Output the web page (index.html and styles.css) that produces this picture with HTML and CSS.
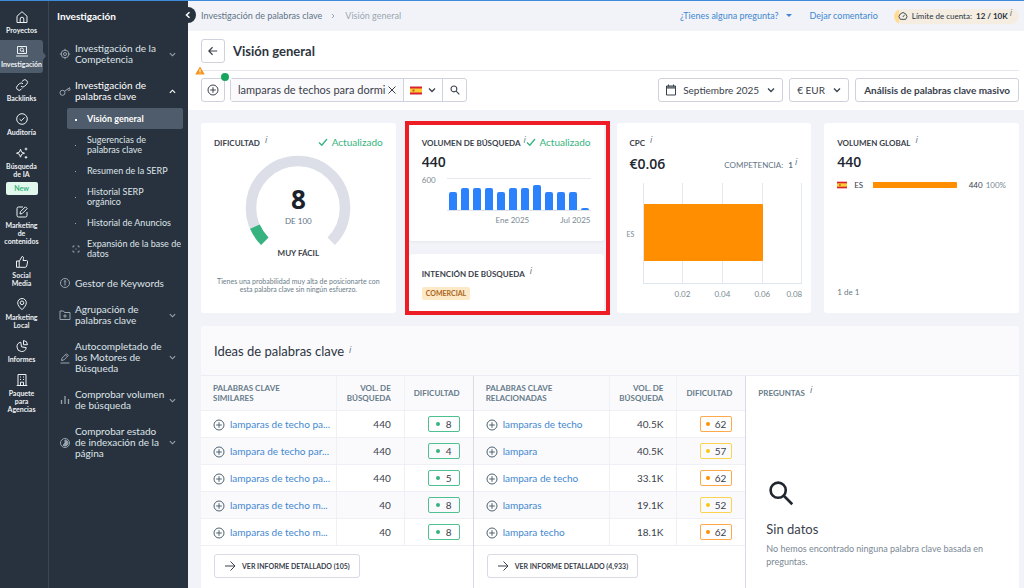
FILE: index.html
```html
<!DOCTYPE html>
<html lang="es">
<head>
<meta charset="utf-8">
<meta name="viewport" content="width=device-width, initial-scale=1">
<title>Visión general</title>
<link rel="stylesheet" href="styles.css">
</head>
<body>
<svg class="defs" aria-hidden="true">
  <symbol id="plus" viewBox="0 0 12 12"><circle cx="6" cy="6" r="5"/><path d="M6 3.2v5.6M3.2 6h5.6"/></symbol>
  <symbol id="down" viewBox="0 0 8 8"><path d="M1 2.5 4 5.5 7 2.5"/></symbol>
  <symbol id="check" viewBox="0 0 10 10"><path d="M1 5.5 3.8 8.2 9 2"/></symbol>
  <symbol id="arrow" viewBox="0 0 12 12"><path d="M1 6h10M6.5 1.5 11 6l-4.500 4.500"/></symbol>
  <symbol id="flag" viewBox="0 0 12 8"><path fill="#d8232f" stroke="none" d="M0 0h12v8H0z"/><path fill="#fc3" stroke="none" d="M0 2h12v4H0z"/><path fill="#b5652a" stroke="none" d="M2.500 3h2v2h-2z"/></symbol>
  <symbol id="search" viewBox="0 0 12 12"><circle cx="4.700" cy="4.700" r="3.500"/><path d="m7.400 7.400 3.800 3.800"/></symbol>
</svg>
<div class="app">
  <nav class="rail" aria-label="Principal">
    <a href="#"><svg viewBox="0 0 14 14"><path d="M2 6.200 7 1.700l5 4.500V12.500H2zM5.200 12.300V9a1.800 1.800 0 0 1 3.600 0v3.300"/></svg>Proyectos</a>
    <a href="#" class="active"><svg viewBox="0 0 14 14"><path d="M2.500 2.500h9v7h-9zM1 12h12"/><circle cx="6.800" cy="5.700" r="1.700"/><path d="m8 7 1.300 1.200"/></svg>Investigación</a>
    <a href="#"><svg viewBox="0 0 14 14"><path d="M6 8.200a2.600 2.600 0 0 0 3.700 0l2-2a2.600 2.600 0 0 0-3.700-3.700L6.900 3.600M8 5.800a2.600 2.600 0 0 0-3.700 0l-2 2A2.600 2.600 0 0 0 6 11.500l1.100-1.100"/></svg>Backlinks</a>
    <a href="#"><svg viewBox="0 0 14 14"><circle cx="7" cy="7" r="5.300"/><path d="m4.600 7.200 1.700 1.600 3.200-3.300"/></svg>Auditoría</a>
    <a href="#"><svg viewBox="0 0 14 14"><path d="m5.500 3.200 1.100 2.900 2.900 1.100-2.900 1.100-1.100 2.900-1.100-2.900-2.900-1.100 2.900-1.100z"/><path d="M11 1.700v2.600M9.700 3h2.600M11 10v2.600M9.700 11.300h2.600"/></svg>Búsqueda<br>de IA<span class="new">New</span></a>
    <a href="#"><svg viewBox="0 0 14 14"><path d="M8 2H3.500Q2 2 2 3.500v7Q2 12 3.500 12h7q1.500 0 1.500-1.500V7M5 9l.4-2.200 5-5 1.800 1.800-5 5z"/></svg>Marketing<br>de<br>contenidos</a>
    <a href="#"><svg viewBox="0 0 14 14"><path d="M1.500 6h2.700v6.300H1.500zM4.200 6.500 7 1.500c1.200 0 1.800.8 1.500 2L8 5.500h3.600q1.200.2 1 1.400l-.9 4.200q-.3 1.200-1.500 1.200h-6"/></svg>Social<br>Media</a>
    <a href="#"><svg viewBox="0 0 14 14"><path d="M7 12.700C4.500 10.300 2.700 8 2.700 5.800a4.300 4.300 0 0 1 8.600 0C11.300 8 9.500 10.300 7 12.700z"/><circle cx="7" cy="5.800" r="1.800"/></svg>Marketing<br>Local</a>
    <a href="#"><svg viewBox="0 0 14 14"><path d="M5.800 3.200a4.700 4.700 0 1 0 5.500 5.500L6.500 7.800zM8.500 1.500a4.300 4.300 0 0 1 4 4.200H8.500z"/></svg>Informes</a>
    <a href="#"><svg viewBox="0 0 14 14"><path d="M3 12.500v-11h8v11M1.700 12.500h10.600M5 4h1M8 4h1M5 6.500h1M8 6.500h1M5.500 12.500V9.200h3v3.300"/></svg>Paquete<br>para<br>Agencias</a>
  </nav>
  <nav class="side" aria-label="Investigación">
    <h2>Investigación</h2>
    <button class="collapse" aria-label="Contraer menú"><svg viewBox="0 0 8 8"><path d="M5.500 1.200 2.500 4l3 2.800"/></svg></button>
    <a class="group" href="#"><svg class="gi" viewBox="0 0 12 12"><circle cx="6" cy="6" r="3.800"/><circle cx="6" cy="6" r="1.500"/><path d="M6 .8v2M6 9.200v2M.8 6h2M9.200 6h2"/></svg><span>Investigación de la<br>Competencia</span><svg class="chev"><use href="#down"/></svg></a>
    <a class="group open" href="#"><svg class="gi" viewBox="0 0 12 12"><circle cx="3.500" cy="7.800" r="2.500"/><path d="M5.500 6.200 11 2.500M8.500 4.200l1 1.600 1.700-1-.8-1.800"/></svg><span>Investigación de<br>palabras clave</span><svg class="chev up"><use href="#down"/></svg></a>
    <ul class="sub">
      <li class="current"><a href="#">Visión general</a></li>
      <li><a href="#">Sugerencias de<br>palabras clave</a></li>
      <li><a href="#">Resumen de la SERP</a></li>
      <li><a href="#">Historial SERP<br>orgánico</a></li>
      <li><a href="#">Historial de Anuncios</a></li>
      <li class="expand"><svg viewBox="0 0 8 8"><path d="M1 2.500V1h1.500M5.500 1H7v1.500M7 5.500V7H5.500M2.500 7H1V5.500M3.500 4h1"/></svg><a href="#">Expansión de la base de<br>datos</a></li>
    </ul>
    <a class="group" href="#"><svg class="gi" viewBox="0 0 12 12"><circle cx="6" cy="6" r="4.500"/><path d="M6 8.600V3.700M4.800 4.700 6 3.600l1.200 1.100"/></svg><span>Gestor de Keywords</span></a>
    <a class="group" href="#"><svg class="gi" viewBox="0 0 12 12"><path d="M1 2h3.500l1 1.500H11V10.500H1zM6 5.200v3.600M4.200 7h3.600"/></svg><span>Agrupación de<br>palabras clave</span><svg class="chev"><use href="#down"/></svg></a>
    <a class="group" href="#"><svg class="gi" viewBox="0 0 12 12"><path d="m2.500 8.500.5-2.300 4.500-4.500 1.800 1.800-4.500 4.500zM6.500 2.700l1.800 1.800M1.500 11h9"/></svg><span>Autocompletado de<br>los Motores de<br>Búsqueda</span><svg class="chev"><use href="#down"/></svg></a>
    <a class="group" href="#"><svg class="gi" viewBox="0 0 12 12"><path d="M2.500 10V6M6 10V2M9.500 10V5" stroke-width="1.300"/></svg><span>Comprobar volumen<br>de búsqueda</span><svg class="chev"><use href="#down"/></svg></a>
    <a class="group" href="#"><svg class="gi" viewBox="0 0 12 12"><circle cx="6" cy="6" r="4.500"/><path d="M6 3a3 3 0 1 1-2 5.200L6 6z" fill="#97a3ad"/></svg><span>Comprobar estado<br>de indexación de la<br>página</span><svg class="chev"><use href="#down"/></svg></a>
  </nav>
  <main>
    <div class="topbar">
      <div class="crumbs"><a href="#">Investigación de palabras clave</a><svg viewBox="0 0 6 8"><path d="m2 2 2 2-2 2"/></svg><span>Visión general</span></div>
      <div class="toplinks"><a href="#">¿Tienes alguna pregunta?<i class="tri"></i></a><a href="#">Dejar comentario</a>
        <span class="limit"><svg viewBox="0 0 12 12"><path d="M2.800 10a4.600 4.600 0 1 1 6.400 0zM5.700 7.300 8 4.500"/></svg>Límite de cuenta:  <b>12 / 10K</b><sup>i</sup></span></div>
    </div>
    <header class="head">
      <div class="titlebar"><button class="box" aria-label="Volver"><svg class="back"><use href="#arrow"/></svg></button><h1>Visión general</h1></div>
      <svg class="warn" viewBox="0 0 10 9"><path d="M5 .5 9.800 8.500H.2z" fill="#f7941e"/><path d="M5 3.200v2.700M5 6.700v.9" stroke="#fff"/></svg>
      <div class="tools">
        <button class="box add" aria-label="Añadir"><svg><use href="#plus"/></svg></button>
        <form class="search">
          <div class="field"><input type="text" aria-label="Palabra clave" value="lamparas de techos para dormi"><button type="button" aria-label="Borrar"><svg viewBox="0 0 10 10"><path d="m1.500 1.500 7 7M8.500 1.500l-7 7"/></svg></button></div>
          <button type="button" class="country" aria-label="España"><svg class="flag"><use href="#flag"/></svg><svg class="dn"><use href="#down"/></svg></button>
          <button type="button" class="go" aria-label="Buscar"><svg><use href="#search"/></svg></button>
        </form>
        <div class="right">
          <button class="box wide"><svg class="cal" viewBox="0 0 12 12"><path d="M1.500 2h9v9h-9zM1.500 4h9M3.500.5v2M8.500.5v2M1.500 3h9"/></svg>Septiembre 2025<svg class="dn"><use href="#down"/></svg></button>
          <label class="currency"><select aria-label="Moneda"><option>€ EUR</option></select><svg class="dn"><use href="#down"/></svg></label>
          <button class="box wide bulk">Análisis de palabras clave masivo</button>
        </div>
      </div>
    </header>
    <div class="content">
      <section class="cards">
        <article class="card difficulty">
          <div class="cap"><h3>Dificultad<sup>i</sup></h3><span class="ok"><svg><use href="#check"/></svg>Actualizado</span></div>
          <div class="gauge">
            <svg viewBox="0 0 106 92" fill="none" stroke-width="10.500"><path stroke="#dcdfe8" d="M19.800 86.200A47 47 0 1 1 86.200 86.200"/><path stroke="#36b37e" d="M19.800 86.200A47 47 0 0 1 9.900 71.700"/></svg>
            <div class="score"><strong>8</strong><span>DE 100</span></div>
          </div>
          <b class="verdict">MUY FÁCIL</b>
          <p>Tienes una probabilidad muy alta de posicionarte con esta palabra clave sin ningún esfuerzo.</p>
        </article>
        <div class="marked">
          <article class="card volume">
            <div class="cap"><h3>Volumen de búsqueda<sup>i</sup></h3><span class="ok"><svg><use href="#check"/></svg>Actualizado</span></div>
            <div class="num">440</div>
            <div class="trend"><span class="max">600</span><div class="bars"><i style="height:57%"></i><i style="height:70%"></i><i style="height:70%"></i><i style="height:70%"></i><i style="height:57%"></i><i style="height:70%"></i><i style="height:70%"></i><i style="height:80%"></i><i style="height:57%"></i><i style="height:57%"></i><i style="height:57%"></i><i style="height:5%"></i></div>
            <div class="months"><span>Ene 2025</span><span>Jul 2025</span></div></div>
          </article>
          <article class="card intent">
            <div class="cap"><h3>Intención de búsqueda<sup>i</sup></h3></div>
            <span class="tag">COMERCIAL</span>
          </article>
        </div>
        <article class="card cpc">
          <div class="cap"><h3>CPC<sup>i</sup></h3></div>
          <div class="pair"><div class="num">€0.06</div><span class="comp">COMPETENCIA: <b>1</b><sup>i</sup></span></div>
          <div class="plot"><span class="cat">ES</span><div class="area"><i></i><i></i><i></i><i></i><div class="bar"></div></div>
            <div class="ticks"><span>0.02</span><span>0.04</span><span>0.06</span><span>0.08</span></div></div>
        </article>
        <article class="card global">
          <div class="cap"><h3>Volumen global<sup>i</sup></h3></div>
          <div class="num">440</div>
          <div class="row"><svg><use href="#flag"/></svg><span>ES</span><i></i><span class="amt">440 <em>100%</em></span></div>
          <div class="pages">1 de 1</div>
        </article>
      </section>
      <section class="ideas">
        <h2>Ideas de palabras clave<sup>i</sup></h2>
        <div class="panels">
          <div class="panel">
            <table>
              <thead><tr><th>Palabras clave<br>similares</th><th>Vol. de<br>búsqueda</th><th>Dificultad</th></tr></thead>
              <tbody>
                <tr><td><svg><use href="#plus"/></svg><a href="#">lamparas de techo pa...</a></td><td>440</td><td><span class="kd">8</span></td></tr>
                <tr><td><svg><use href="#plus"/></svg><a href="#">lampara de techo par...</a></td><td>440</td><td><span class="kd">4</span></td></tr>
                <tr><td><svg><use href="#plus"/></svg><a href="#">lamparas de techo pa...</a></td><td>440</td><td><span class="kd">5</span></td></tr>
                <tr><td><svg><use href="#plus"/></svg><a href="#">lamparas de techo m...</a></td><td>40</td><td><span class="kd">8</span></td></tr>
                <tr><td><svg><use href="#plus"/></svg><a href="#">lamparas de techo m...</a></td><td>40</td><td><span class="kd">8</span></td></tr>
              </tbody>
            </table>
            <button class="report"><svg><use href="#arrow"/></svg>VER INFORME DETALLADO (105)</button>
          </div>
          <div class="panel">
            <table>
              <thead><tr><th>Palabras clave<br>relacionadas</th><th>Vol. de<br>búsqueda</th><th>Dificultad</th></tr></thead>
              <tbody>
                <tr><td><svg><use href="#plus"/></svg><a href="#">lamparas de techo</a></td><td>40.5K</td><td><span class="kd high">62</span></td></tr>
                <tr><td><svg><use href="#plus"/></svg><a href="#">lampara</a></td><td>40.5K</td><td><span class="kd mid">57</span></td></tr>
                <tr><td><svg><use href="#plus"/></svg><a href="#">lampara de techo</a></td><td>33.1K</td><td><span class="kd high">62</span></td></tr>
                <tr><td><svg><use href="#plus"/></svg><a href="#">lamparas</a></td><td>19.1K</td><td><span class="kd mid">52</span></td></tr>
                <tr><td><svg><use href="#plus"/></svg><a href="#">lampara techo</a></td><td>18.1K</td><td><span class="kd high">62</span></td></tr>
              </tbody>
            </table>
            <button class="report"><svg><use href="#arrow"/></svg>VER INFORME DETALLADO (4,933)</button>
          </div>
          <div class="panel questions">
            <h3>Preguntas<sup>i</sup></h3>
            <div class="empty"><svg><use href="#search"/></svg><h4>Sin datos</h4><p>No hemos encontrado ninguna palabra clave basada en preguntas.</p></div>
          </div>
        </div>
      </section>
    </div>
  </main>
</div>
</body>
</html>
```

FILE: styles.css
```css
* { box-sizing: border-box; margin: 0; padding: 0; }
body { font: 10px/12px Lato, "Noto Sans", sans-serif; color: #3a414b; background: #f2f3f8; }
button, input, select { font: inherit; color: inherit; background: none; border: 0; }
a { color: #3f87d0; text-decoration: none; }
svg { fill: none; stroke: currentColor; flex: none; }
sup { font: italic 9px/8px "Open Sans", sans-serif; color: #5b7080; margin-left: 5px; vertical-align: 3px; text-transform: none; }
.defs { position: absolute; width: 0; height: 0; }
.app { display: flex; border-top: 1px solid #3f8bdb; overflow: hidden; height: 100vh; }

.rail { width: 49px; flex: none; background: #27323e; border-right: 1px solid #3a4652; padding: 5px 5px 0 0; }
.rail a { position: relative; display: flex; flex-direction: column; align-items: center; width: 43px; padding: 4px 0 5px; margin-bottom: 1px; border-radius: 0 3px 3px 0; font-size: 7px; line-height: 8px; font-weight: 700; color: #eef1f4; text-align: center; }
.rail svg { width: 14px; height: 14px; margin-bottom: 2px; }
.rail .active { background: #4e5c6b; }
.rail .active::after { content: ""; position: absolute; left: 100%; top: 12px; border: 4px solid transparent; border-left: 3px solid #4e5c6b; border-right: 0; }
.new { width: 32px; height: 13px; margin-top: 4px; border-radius: 2px; background: #e2f8ec; color: #36b37e; line-height: 13px; }

.side { position: relative; z-index: 2; width: 139px; flex: none; background: #27323e; color: #dfe4e9; padding-bottom: 12px; }
.side h2 { font-size: 10px; line-height: 12px; padding: 9px 8px 14px; color: #fff; }
.side a { color: inherit; }
.collapse { position: absolute; right: -8px; top: 6px; width: 16px; height: 16px; border-radius: 50%; background: #27323e; color: #fff; display: grid; place-items: center; }
.collapse svg { width: 8px; height: 8px; stroke-width: 1.5; }
.group { display: flex; align-items: center; padding: 7px 12px 8px 10px; font-size: 10px; line-height: 11px; }
.group span { flex: 1; white-space: nowrap; }
.gi { width: 12px; height: 12px; margin-right: 4px; color: #97a3ad; stroke-width: 1; }
.chev { width: 7px; height: 7px; color: #97a3ad; stroke-width: 1.3; }
.chev.up { transform: scaleY(-1); color: #fff; }
.group.open { color: #fff; }
.sub { list-style: none; margin: -2px 5px 8px 18px; }
.sub li { position: relative; padding: 0 0 0 20px; font-size: 9px; line-height: 10px; margin-bottom: 11px; white-space: nowrap; }
.sub li::before { content: ""; position: absolute; left: 8px; top: 50%; width: 1px; height: 1px; background: #97a3ad; }
.sub .current { background: #4e5c6b; border-radius: 2px; padding: 6px 0 5px 20px; margin-bottom: 6px; color: #fff; font-weight: 700; }
.sub .current::before { width: 2px; height: 2px; background: #fff; }
.sub .expand { display: flex; align-items: center; gap: 7px; padding-left: 5px; }
.sub .expand::before { display: none; }
.expand svg { width: 8px; height: 8px; color: #97a3ad; }

main { flex: 1; min-width: 0; }
.topbar { height: 30px; padding: 0 5px 0 13px; display: flex; justify-content: space-between; align-items: center; font-size: 9px; }
.crumbs, .toplinks { display: flex; align-items: center; }
.crumbs a { color: #5f7385; }
.crumbs span { color: #9aa7b2; }
.crumbs svg { width: 6px; height: 8px; margin: 0 9px 0 8px; color: #9aa7b2; }
.toplinks { gap: 18px; }
.tri { display: inline-block; border: 3px solid transparent; border-top-color: #3f87d0; border-bottom: 0; margin: 0 0 2px 7px; }
.limit { display: flex; align-items: center; height: 15px; margin-left: -2px; padding: 0 7px 0 4px; border-radius: 8px; background: linear-gradient(90deg, #ffdc92 5px, #f5ede2 5px); font-size: 8px; color: #27323e; white-space: pre; }
.limit svg { width: 10px; height: 10px; margin-right: 4px; }
.limit sup, .comp sup { margin-left: 2px; }
.limit sup { align-self: flex-start; }

.head { position: relative; background: #fff; padding: 0 5px 0 13px; height: 79px; }
.titlebar { display: flex; align-items: center; gap: 8px; height: 40px; border-bottom: 1px solid #e6e7ef; }
h1 { font-size: 13px; line-height: 16px; color: #2d343e; }
.box { width: 24px; height: 24px; border: 1px solid #cfd1dc; border-radius: 3px; display: grid; place-items: center; background: #fff; }
.box svg { width: 12px; height: 12px; }
.box .back { width: 10px; height: 10px; transform: scaleX(-1); stroke-width: 1.4; }
.warn { position: absolute; left: 7px; top: 35px; width: 10px; height: 9px; stroke: none; }
.tools { display: flex; align-items: center; height: 38px; }
.add { position: relative; }
.add::after { content: ""; position: absolute; right: -5px; top: -6px; width: 8px; height: 8px; border-radius: 50%; background: #17a55e; }
.search { display: flex; height: 24px; margin-left: 5px; border: 1px solid #cfd1dc; border-radius: 3px; }
.field { display: flex; align-items: center; width: 173px; background: #fafafc; border-right: 1px solid #cfd1dc; padding: 0 6px 0 7px; }
.field input { flex: 1; min-width: 0; font-size: 11px; outline: 0; }
.field button, .go, .country { display: flex; align-items: center; justify-content: center; }
.field svg { width: 10px; height: 10px; }
.country { width: 39px; gap: 6px; border-right: 1px solid #cfd1dc; }
.flag { width: 12px; height: 9px; }
.dn { width: 8px; height: 8px; stroke-width: 1.3; }
.go { width: 23px; }
.go svg { width: 10px; height: 10px; stroke-width: 1.3; }
.right { display: flex; gap: 6px; margin-left: auto; }
.wide { display: flex; align-items: center; width: auto; padding: 0 7px; }
.wide .cal { margin: 0 6px 1px -1px; }
.box .dn { width: 8px; height: 8px; margin-left: 8px; }
.bulk { padding: 0 8px; font-weight: 700; }
.currency { display: flex; align-items: center; border: 1px solid #cfd1dc; border-radius: 3px; padding: 0 7px; height: 24px; }
.currency select { appearance: none; padding-right: 8px; }

.content { padding: 13px 5px 0 13px; }
.cards { display: grid; grid-template-columns: repeat(4, minmax(0, 1fr)); gap: 13px; }
.card { background: #fff; border-radius: 3px; padding: 13px; }
.cap { display: flex; align-items: center; justify-content: space-between; height: 12px; white-space: nowrap; }
h3 { font-size: 8px; line-height: 10px; text-transform: uppercase; color: #3a414b; }
.ok { display: flex; gap: 4px; align-items: center; color: #36b37e; }
.ok svg { width: 10px; height: 10px; stroke-width: 1.3; }
.num { font: 600 14px/16px "Open Sans", sans-serif; color: #20262f; margin-top: 6px; }
.difficulty { display: flex; flex-direction: column; align-items: center; min-height: 190px; }
.difficulty .cap { align-self: stretch; }
.gauge { display: grid; margin-top: 7px; }
.gauge > * { grid-area: 1 / 1; }
.gauge > svg { width: 106px; height: 92px; }
.score { display: flex; flex-direction: column; align-items: center; padding-top: 33px; }
.score strong { font: 700 26px/23px "Open Sans", sans-serif; color: #1b222c; }
.score span { font-size: 8px; line-height: 10px; color: #5f7385; margin-top: 5px; }
.verdict { font-size: 8px; line-height: 10px; margin-top: 1px; }
.difficulty p { font-size: 7px; line-height: 8px; text-align: center; color: #6a7c88; margin: 19px 0 0; }
.marked { position: relative; display: flex; flex-direction: column; gap: 13px; }
.marked::after { content: ""; position: absolute; inset: -2px -6px -2px -4px; border: 4px solid #ee1c25; pointer-events: none; }
.volume { height: 118px; }
.marked .card { box-shadow: 0 1px 3px rgba(40, 50, 90, .06); }
.intent { flex: 1; }
.volume sup { margin-left: 3px; }
.volume .ok { gap: 3px; }
.trend { display: grid; grid-template-columns: 25px 1fr; margin-top: 6px; font-size: 9px; color: #7a8994; }
.max { line-height: 8px; font-size: 8px; }
.bars { display: flex; align-items: flex-end; gap: 4px; height: 33px; margin-top: 2px; padding: 0 2px; border-top: 1px solid #e6e7ef; border-bottom: 1px solid #dfe3ee; }
.bars i { flex: 1; background: #2c82fc; border-radius: 2px 2px 0 0; }
.months { grid-column: 2; display: flex; justify-content: flex-end; gap: 31px; font-size: 8px; margin-top: 3px; }
.tag { display: inline-block; margin-top: 8px; padding: 0 4px; font-size: 7px; line-height: 13px; font-weight: 700; color: #a9661c; background: #fde8c8; border-radius: 2px; }
.cpc { padding-right: 9px; }
.pair { display: flex; justify-content: space-between; align-items: center; margin-top: 8px; }
.pair .num { margin: 0; }
.comp { font-size: 8px; color: #5f7385; padding-right: 5px; white-space: pre; }
.comp b { padding-left: 3px; }
.plot { display: grid; grid-template-columns: 13px 1fr; margin-top: 11px; font-size: 8px; color: #7a8994; align-items: center; }
.cat { margin-left: -3px; font-size: 7px; }
.area { position: relative; display: grid; grid-template-columns: repeat(4, 1fr); height: 101px; border-left: 1px solid #dfe6f1; border-bottom: 1px solid #dfe6f1; }
.area i { border-right: 1px solid #e6e9ed; }
.area .bar { position: absolute; left: 0; top: 21%; width: 75%; height: 57%; background: #ff8f00; border-radius: 0 1px 1px 0; }
.ticks { grid-column: 2; display: grid; grid-template-columns: 1fr 2fr 2fr 2fr 1fr; margin-top: 4px; text-align: center; }
.ticks span:first-child { grid-column: 2; }
.ticks span:last-child { text-align: right; }
.global { display: flex; flex-direction: column; }
.row { display: flex; align-items: center; margin-top: 9px; font-size: 8px; }
.row svg { width: 10px; height: 8px; margin-right: 7px; }
.row i { flex: 1; height: 6px; margin: 0 12px 0 10px; background: #ff8f00; border-radius: 0 1px 1px 0; }
.row em { font-style: normal; color: #7a8994; margin-left: 1px; }
.pages { margin-top: auto; margin-bottom: 2px; font-size: 8px; color: #6a7c88; }

.ideas { margin-top: 13px; background: #fafafd; border-radius: 3px; }
.ideas h2 { font-size: 13px; line-height: 17px; font-weight: 400; padding: 17px 13px 15px; color: #2d343e; }
.panels { display: grid; grid-template-columns: 1fr 1fr 1fr; border-top: 1px solid #ececf4; }
.panel { background: #fff; border-right: 1px solid #d8dae5; padding-bottom: 30px; }
.panel:last-child { border: 0; }
table { width: 100%; border-collapse: separate; border-spacing: 0; table-layout: fixed; }
th, td { border-right: 1px solid #eff0f6; border-bottom: 1px solid #eff0f6; text-align: right; padding: 0 13px 0 0; width: 25%; }
th:last-child, td:last-child { border-right: 0; }
th:first-child, td:first-child { text-align: left; width: 50%; padding: 0 0 0 12px; white-space: nowrap; }
th { height: 35px; font-size: 8px; line-height: 10px; text-transform: uppercase; color: #667b89; background: #fafafd; }
td { height: 27px; color: #3a414b; }
tr:nth-child(even) td { background: #fafafd; }
td svg { width: 12px; height: 12px; margin-right: 5px; vertical-align: -3px; color: #4f6270; }
.kd { display: inline-flex; align-items: center; justify-content: space-between; width: 32px; height: 16px; padding: 0 7px; border: 1px solid #4fc08f; border-radius: 2px; vertical-align: middle; }
.kd::before { content: ""; width: 4px; height: 4px; border-radius: 50%; background: #36b37e; }
.kd.high, .kd.mid { padding: 0 5px; border-color: #ffa94a; }
.kd.high::before { background: #ff8f00; }
.kd.mid { border-color: #fbd34e; }
.kd.mid::before { background: #f9c70c; }
.report { display: flex; align-items: center; height: 24px; margin: 8px 0 0 13px; padding: 0 9px; border: 1px solid #d8dae5; border-radius: 3px; font-size: 7px; font-weight: 700; }
.report svg { width: 12px; height: 12px; margin-right: 6px; }
.questions h3 { padding: 10px 12px 12px; color: #667b89; }
.empty { padding: 70px 20px 0; }
.empty svg { width: 26px; height: 26px; margin-left: 2px; color: #20262f; stroke-width: 1.2; }
.empty h4 { font-size: 13px; line-height: 18px; font-weight: 400; margin: 12px 0 4px; }
.empty p { font-size: 9px; line-height: 13px; color: #7a8994; }
```
